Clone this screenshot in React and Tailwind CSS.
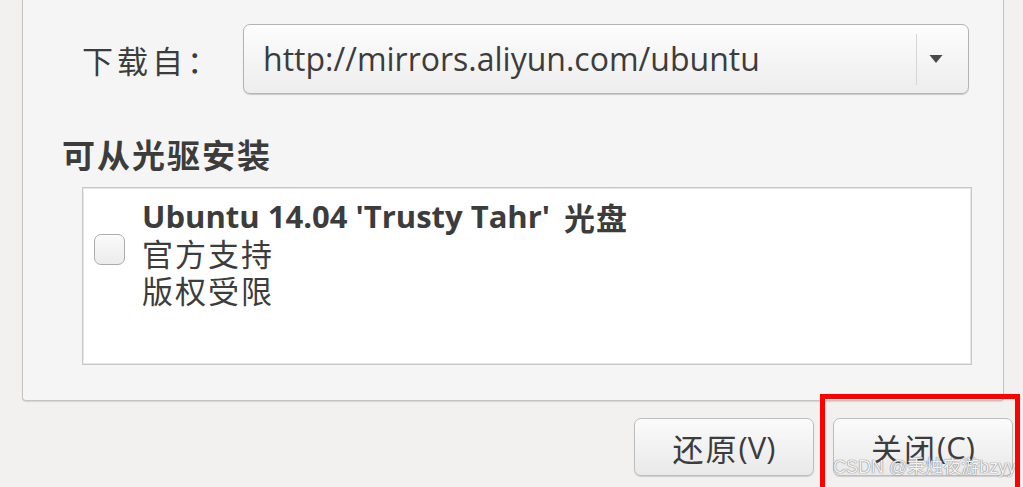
import React from "react";

const latin = { fontFamily: '"Open Sans", "Noto Sans CJK SC", sans-serif' };
const cjk = { fontFamily: '"Noto Sans CJK SC", sans-serif' };

export default function App() {
  return (
    <div className="relative w-[1023px] h-[487px] overflow-hidden bg-[#f2f1f0] text-[#3c3c3c]" style={latin}>
      <div className="ml-[22px] w-[982px] h-[401px] bg-[#f5f5f5] border-x border-b border-[#c4c4c4] rounded-b-[4px] shadow-[0_1px_1px_rgba(0,0,0,0.12)] flex flex-col">
        <div className="flex items-center mt-[24px]">
          <div className="w-[220px] pl-[59px] text-[31px] leading-none tracking-[4px] whitespace-nowrap" style={cjk}>下载自：</div>
          <div className="w-[726px] h-[70px] rounded-[7px] border border-[#b4b4b4] bg-gradient-to-b from-[#fdfdfd] to-[#ededed] shadow-[0_1px_1px_rgba(0,0,0,0.18)] flex items-center">
            <div className="flex-1 pl-[19px] text-[32px] leading-none whitespace-nowrap">http://mirrors.aliyun.com/ubuntu</div>
            <div className="w-px h-[51px] bg-[#d6d6d6]"></div>
            <div className="w-[51px] flex items-center pl-[12px]">
              <svg width="14" height="10" viewBox="0 0 14 10"><path d="M0.5 1 L13.5 1 L7 9 Z" fill="#4a4a4a" /></svg>
            </div>
          </div>
        </div>
        <div className="mt-[44px] pl-[39px] text-[33px] font-bold leading-none tracking-[2px]" style={cjk}>可从光驱安装</div>
        <div className="mt-[16px] ml-[59px] w-[890px] h-[178px] bg-white border border-[#c8c8c8] shadow-[inset_0_0_0_1px_#e6e6e6] flex">
          <div className="pl-[11px] pt-[46px]">
            <div className="w-[31px] h-[31px] rounded-[7px] border border-[#ababab] bg-gradient-to-b from-[#fafafa] to-[#ececec] shadow-[inset_0_1px_1px_rgba(255,255,255,0.8)]"></div>
          </div>
          <div className="pl-[17px] pt-[10px] flex flex-col">
            <div className="h-[36px] flex items-center text-[31px] font-bold leading-none whitespace-nowrap">
              <span>Ubuntu 14.04 'Trusty Tahr'</span>
              <span className="ml-[14px] text-[31px] tracking-[1px]" style={cjk}>光盘</span>
            </div>
            <div className="h-[37px] flex items-center text-[31px] leading-none tracking-[2px]" style={cjk}>官方支持</div>
            <div className="h-[37px] flex items-center text-[31px] leading-none tracking-[2px]" style={cjk}>版权受限</div>
          </div>
        </div>
      </div>
      <div className="flex justify-end gap-[19px] pr-[10px] mt-[17px]">
        <button className="w-[180px] h-[58px] rounded-[7px] border border-[#bdbdbd] bg-gradient-to-b from-[#fbfbfb] to-[#e9e9e9] shadow-[0_1px_1px_rgba(0,0,0,0.15)] flex items-center justify-center text-[31px] leading-none text-[#3c3c3c]">
          <span className="tracking-[2px]" style={cjk}>还原</span><span>(V)</span>
        </button>
        <button className="w-[180px] h-[58px] rounded-[7px] border border-[#bdbdbd] bg-gradient-to-b from-[#fbfbfb] to-[#e9e9e9] shadow-[0_1px_1px_rgba(0,0,0,0.15)] flex items-center justify-center text-[31px] leading-none text-[#3c3c3c]">
          <span className="tracking-[2px]" style={cjk}>关闭</span><span>(C)</span>
        </button>
      </div>
      <div className="absolute left-[833px] top-[458px] text-[18px] leading-none whitespace-nowrap text-white/90 [text-shadow:0_0_1px_#777,0_0_1px_#777]" style={{ fontFamily: '"Liberation Sans", "Noto Sans CJK SC", sans-serif' }}>
        CSDN @秉烛夜游bzyy
      </div>
      <div className="absolute left-[820px] top-[394px] w-[200px] h-[100px] border-[5px] border-[#ff0000] pointer-events-none"></div>
    </div>
  );
}
